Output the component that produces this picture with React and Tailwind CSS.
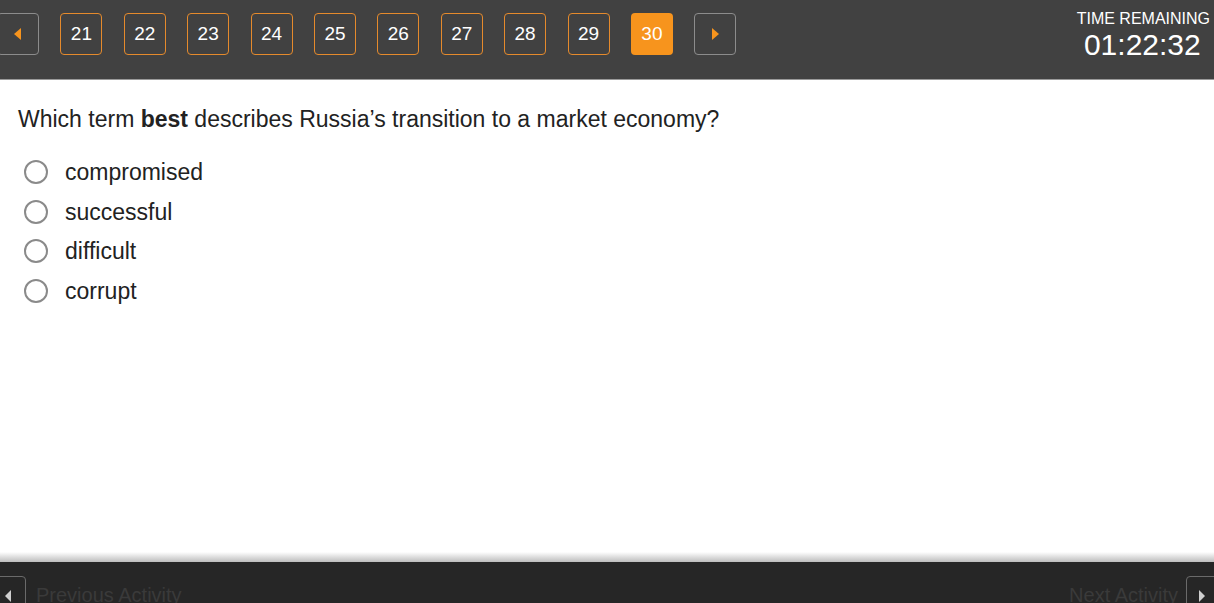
import React from "react";

const nums = [21, 22, 23, 24, 25, 26, 27, 28, 29, 30];
const options = ["compromised", "successful", "difficult", "corrupt"];

export default function App() {
  return (
    <div
      className="w-[1214px] h-[603px] overflow-hidden flex flex-col bg-white"
      style={{ fontFamily: '"Liberation Sans", Arial, sans-serif' }}
    >
      <header className="h-[80px] shrink-0 bg-[#414141] border-b border-[#9a9a9a] flex items-start relative">
        <div className="flex items-center gap-[21.4px] pt-[13px] ml-[-3px]">
          <button className="w-[42px] h-[42px] rounded-[4px] border-[1.5px] border-[#8c8c8c] flex items-center justify-center">
            <svg width="8" height="12" viewBox="0 0 8 12">
              <polygon points="7,0 7,12 0,6" fill="#f7941d" />
            </svg>
          </button>
          {nums.map((n) =>
            n === 30 ? (
              <div
                key={n}
                className="w-[42px] h-[42px] rounded-[4px] bg-[#f7941d] flex items-center justify-center text-white text-[19px]"
              >
                {n}
              </div>
            ) : (
              <div
                key={n}
                className="w-[42px] h-[42px] rounded-[4px] border-[1.5px] border-[#e58a2c] flex items-center justify-center text-white text-[19px]"
              >
                {n}
              </div>
            )
          )}
          <button className="w-[42px] h-[42px] rounded-[4px] border-[1.5px] border-[#8c8c8c] flex items-center justify-center">
            <svg width="8" height="12" viewBox="0 0 8 12">
              <polygon points="1,0 1,12 8,6" fill="#f7941d" />
            </svg>
          </button>
        </div>
        <div className="ml-auto mr-[4px] pt-[9px] flex flex-col items-center text-white">
          <div className="text-[16px] leading-[20px]">TIME REMAINING</div>
          <div className="text-[30px] leading-[32px] mr-[2px]">01:22:32</div>
        </div>
      </header>

      <main className="flex-1 pl-[18px] pt-[26px] text-[#222]">
        <p className="text-[23px] leading-[26px]">
          Which term <b>best</b> describes Russia’s transition to a market economy?
        </p>
        <ul className="mt-[28px] flex flex-col gap-[15.6px]">
          {options.map((o) => (
            <li key={o} className="flex items-center h-[24px]">
              <span className="ml-[6px] w-[24px] h-[24px] rounded-full border-2 border-[#8a8a8a] bg-white" />
              <span className="ml-[17px] text-[23px] leading-[24px] text-[#222]">{o}</span>
            </li>
          ))}
        </ul>
      </main>

      <div className="h-[10px] shrink-0 bg-gradient-to-b from-white to-[#bdbdbd]" />
      <footer className="h-[41px] shrink-0 bg-[#262626] flex items-start">
        <div className="flex items-start pt-[14px]">
          <div className="w-[40px] h-[40px] ml-[-14px] rounded-[4px] border border-[#6a6a6a] flex items-center justify-start pl-[18px]">
            <svg width="6" height="12" viewBox="0 0 6 12">
              <polygon points="6,0 6,12 0,6" fill="#cfcfcf" />
            </svg>
          </div>
          <span className="ml-[10px] mt-[7px] text-[20px] leading-[24px] text-[#3a3a3a]">Previous Activity</span>
        </div>
        <div className="ml-auto flex items-start pt-[14px]">
          <span className="mr-[8px] mt-[7px] text-[20px] leading-[24px] text-[#3a3a3a]">Next Activity</span>
          <div className="w-[40px] h-[40px] mr-[-12px] rounded-[4px] border border-[#6a6a6a] flex items-center justify-start pl-[12px]">
            <svg width="6" height="12" viewBox="0 0 6 12">
              <polygon points="0,0 0,12 6,6" fill="#cfcfcf" />
            </svg>
          </div>
        </div>
      </footer>
    </div>
  );
}
